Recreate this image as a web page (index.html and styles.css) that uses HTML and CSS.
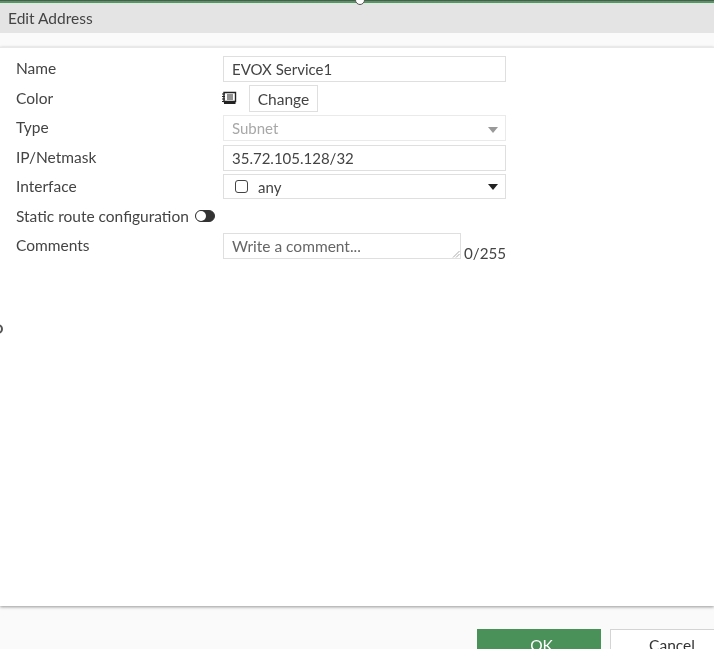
FILE: index.html
```html
<!DOCTYPE html>
<html lang="en">
<head>
<meta charset="utf-8">
<title>Edit Address</title>
<link rel="stylesheet" href="styles.css">
</head>
<body>
<div class="dialog">
  <div class="topline"></div>
  <span class="handle-top"></span>
  <header class="title">Edit Address</header>
  <div class="gap"></div>
  <main class="content">
    <div class="row">
      <label class="lbl">Name</label>
      <div class="field">EVOX Service1</div>
    </div>
    <div class="row">
      <label class="lbl">Color</label>
      <div class="color">
        <svg class="book" viewBox="0 0 16 14" width="16" height="14"><path d="M3 1.500h11.500v9H3z" fill="#fff" stroke="#222" stroke-width="1.400"/><path d="M3 10.500h11.500v2.500H3z" fill="#222"/><path d="M6 4h6M6 6h6M6 8h6" stroke="#222" stroke-width="1"/><path d="M1 3h3M1 5.500h3M1 8h3M1 10.500h3" stroke="#222" stroke-width="1"/></svg>
        <button class="change">Change</button>
      </div>
    </div>
    <div class="row">
      <label class="lbl">Type</label>
      <div class="field disabled">Subnet<span class="caret grey"></span></div>
    </div>
    <div class="row">
      <label class="lbl">IP/Netmask</label>
      <div class="field">35.72.105.128/32</div>
    </div>
    <div class="row">
      <label class="lbl">Interface</label>
      <div class="field iface"><span class="box"></span><span>any</span><span class="caret"></span></div>
    </div>
    <div class="row">
      <label class="lbl wide">Static route configuration <span class="toggle"><span class="knob"></span></span></label>
    </div>
    <div class="row comments">
      <label class="lbl">Comments</label>
      <div class="textarea">Write a comment...
        <svg class="grip" viewBox="0 0 8 8" width="8" height="8"><path d="M1 7.500L7.500 1M4 7.500L7.500 4" stroke="#aaa" stroke-width="1"/></svg>
      </div>
      <span class="count">0/255</span>
    </div>
    <span class="handle-left"></span>
  </main>
  <footer class="foot">
    <button class="btn ok">OK</button>
    <button class="btn cancel">Cancel</button>
  </footer>
</div>
</body>
</html>
```
FILE: styles.css
```css
* { box-sizing: border-box; }
html, body { margin: 0; padding: 0; height: 100%; overflow: hidden; }
body { background: #fff; font-family: Lato, "Liberation Sans", sans-serif; font-size: 15.5px; color: #444; }
.dialog { position: relative; width: 714px; height: 649px; display: flex; flex-direction: column; overflow: hidden; background: #fafafa; filter: blur(.35px); }
.topline { height: 3px; flex: none; background: linear-gradient(#555 0 1px, #4f9a5f 1px 3px); }
.handle-top { position: absolute; left: 355px; top: -5px; width: 10px; height: 10px; border-radius: 50%; background: #fff; border: 1px solid #555; }
.handle-left { position: absolute; left: -7px; top: 276px; width: 10px; height: 10px; border-radius: 50%; background: #fff; border: 2px solid #555; }
.title { flex: none; height: 30px; background: #e4e4e4; padding: 6px 0 0 8px; line-height: 18px; }
.gap { flex: none; height: 14px; background: #fafafa; }
.content { flex: none; height: 559px; background: #fff; padding: 8px 0 0 16px; box-shadow: 0 1px 3px rgba(0,0,0,.4); border-top: 1px solid #e8e8e8; position: relative; }
.row { display: flex; align-items: flex-start; height: 29.500px; }
.lbl { flex: none; width: 207px; line-height: 25px; white-space: nowrap; display: flex; align-items: center; gap: 6px; height: 25px; }
.field { width: 283px; height: 26px; border: 1px solid #dfdfdf; padding: 0 8px; line-height: 24px; font-size: 15px; display: flex; align-items: center; position: relative; background: #fff; }
.disabled { color: #a8a8a8; border-color: #eaeaea; }
.iface { gap: 10px; padding-left: 11px; height: 25px; }
.box { width: 13px; height: 13px; border: 1.500px solid #444; border-radius: 3px; }
.caret { position: absolute; right: 7px; top: 9px; width: 0; height: 0; border-left: 5.500px solid transparent; border-right: 5.500px solid transparent; border-top: 6px solid #222; }
.caret.grey { border-top-color: #999; top: 11px; }
.color { display: flex; align-items: center; gap: 12px; height: 26px; margin-left: -2px; }
.book { margin-top: -2px; }
.change { font: inherit; color: inherit; width: 69px; height: 27px; padding: 0; background: #fff; border: 1px solid #dfdfdf; }
.toggle { position: relative; display: inline-block; width: 20px; height: 12px; border-radius: 6px; background: #333; border: 1px solid #333; }
.knob { position: absolute; left: 0; top: 0; width: 10px; height: 10px; border-radius: 50%; background: #fff; }
.comments { align-items: flex-start; }
.textarea { position: relative; width: 238px; height: 26px; border: 1px solid #dfdfdf; padding: 0 8px; line-height: 24px; color: #666; }
.grip { position: absolute; right: 0; bottom: 0; }
.count { margin: 11px 0 0 3px; line-height: 18px; color: #444; font-size: 15.2px; }
.foot { flex: 1; display: flex; justify-content: flex-end; gap: 9px; padding: 23px 0 0 0; background: #fafafa; overflow: hidden; margin-right: -20px; }
.btn { font: inherit; width: 124px; height: 34px; padding: 0 0 3px; flex: none; text-align: center; }
.ok { background: #4a9059; border: 1px solid #4a9059; color: #fff; padding-left: 5px; }
.cancel { background: #fff; border: 1px solid #d4d4d4; color: #333; }
```
